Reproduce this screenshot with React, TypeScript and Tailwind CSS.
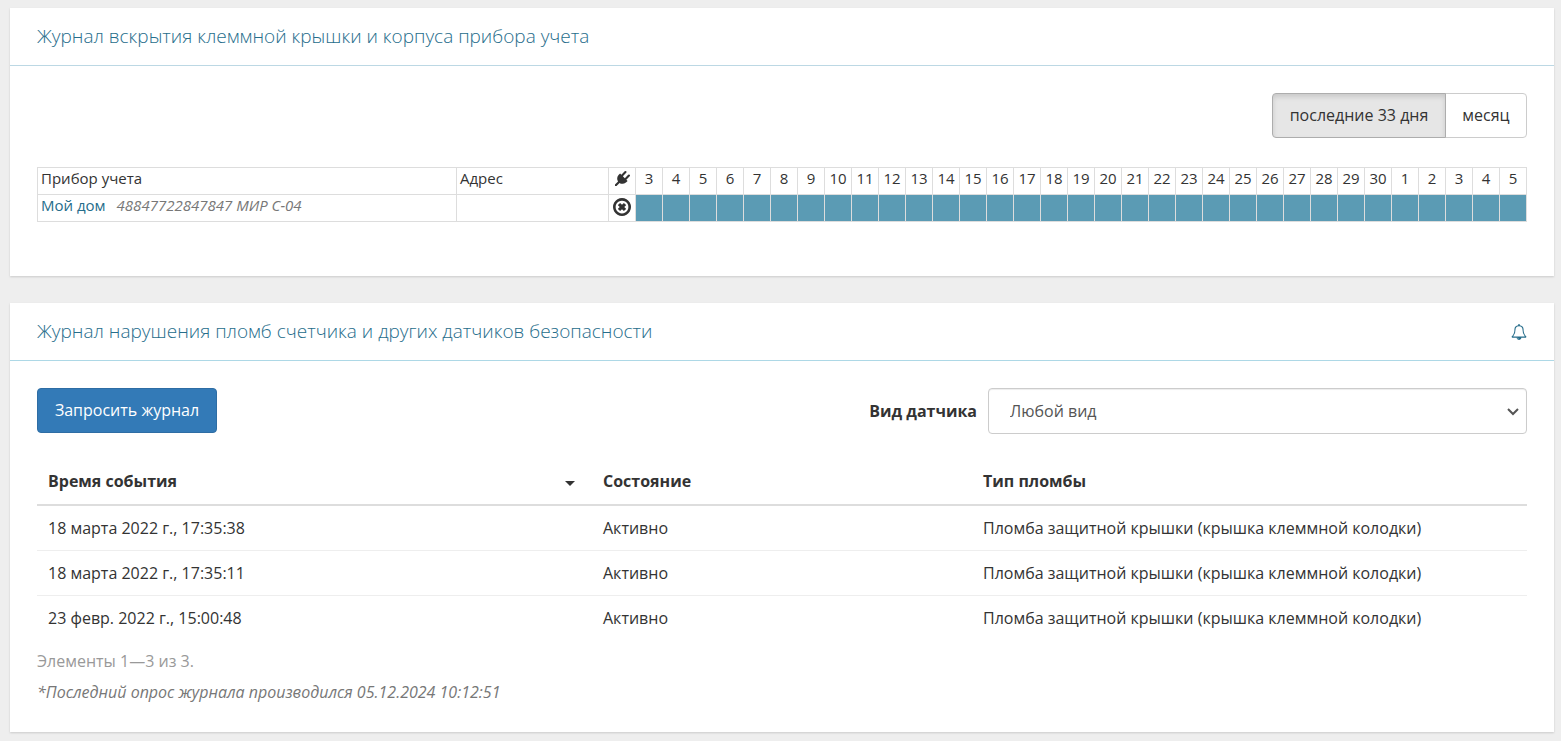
import { useState } from 'react';

const days = [
  3, 4, 5, 6, 7, 8, 9, 10, 11, 12, 13, 14, 15, 16, 17, 18, 19, 20, 21, 22, 23,
  24, 25, 26, 27, 28, 29, 30, 1, 2, 3, 4, 5,
];

const events = [
  { time: '18 марта 2022 г., 17:35:38', state: 'Активно' },
  { time: '18 марта 2022 г., 17:35:11', state: 'Активно' },
  { time: '23 февр. 2022 г., 15:00:48', state: 'Активно' },
];

const PlugIcon = () => (
  <svg viewBox="0 0 1792 1792" className="mx-auto size-[15px]" fill="currentColor">
    <path d="M1755 453q37 38 37 90.5t-37 90.5l-401 400 150 150-160 160q-163 163-389.5 186.5t-411.5-100.5l-362 362h-181v-181l362-362q-124-185-100.5-411.5t186.5-389.5l160-160 150 150 400-401q38-37 91-37t90 37 37 90.5-37 90.5l-400 401 234 234 401-400q38-37 91-37t90 37z" />
  </svg>
);

const CrossIcon = () => (
  <svg viewBox="128 128 1536 1536" className="mx-auto size-[18px]" fill="currentColor">
    <path d="M1225 1079l-146 146q-10 10-23 10t-23-10l-137-137-137 137q-10 10-23 10t-23-10l-146-146q-10-10-10-23t10-23l137-137-137-137q-10-10-10-23t10-23l146-146q10-10 23-10t23 10l137 137 137-137q10-10 23-10t23 10l146 146q10 10 10 23t-10 23l-137 137 137 137q10 10 10 23t-10 23zm215-183q0-148-73-273t-198-198-273-73-273 73-198 198-73 273 73 273 198 198 273 73 273-73 198-198 73-273zm224 0q0 209-103 385.5t-279.5 279.5-385.5 103-385.5-103-279.5-279.5-103-385.5 103-385.5 279.5-279.5 385.5-103 385.5 103 279.5 279.5 103 385.5z" />
  </svg>
);

const BellIcon = () => (
  <svg viewBox="0 0 1792 1792" className="size-4" fill="currentColor">
    <path d="M912 1696q0-16-16-16-59 0-101.5-42.5t-42.5-101.5q0-16-16-16t-16 16q0 73 51.5 124.5t124.5 51.5q16 0 16-16zm-666-288h1300q-266-300-266-832 0-51-24-105t-69-103-121.5-80.5-169.5-31.5-169.5 31.5-121.5 80.5-69 103-24 105q0 532-266 832zm1482 0q0 52-38 90t-90 38h-448q0 106-75 181t-181 75-181-75-75-181h-448q-52 0-90-38t-38-90q50-42 91-88t85-119.5 74.5-158.5 50-206 19.5-260q0-152 117-282.5t307-158.5q-8-19-8-39 0-40 28-68t68-28 68 28 28 68q0 20-8 39 190 28 307 158.5t117 282.5q0 139 19.5 260t50 206 74.5 158.5 85 119.5 91 88z" />
  </svg>
);

// Журнал вскрытия
const OpeningLog = () => {
  const [period, setPeriod] = useState('days');

  const active =
    'z-10 border-[#adadad] bg-[#e6e6e6] shadow-[inset_0_3px_5px_rgba(0,0,0,0.125)]';
  const idle = 'border-[#ccc] bg-white';

  return (
    <section className="bg-white shadow-[0_1px_2px_rgba(0,0,0,0.15)]">
      <header className="border-b border-[#bcd8e4] px-[27px] py-[15px]">
        <h2 className="text-[19px] leading-[27px] font-light text-[#266d8b]">
          Журнал вскрытия клеммной крышки и корпуса прибора учета
        </h2>
      </header>
      <div className="px-[27px] pt-[27px] pb-[54px]">
        <div className="flex justify-end">
          <button
            type="button"
            onClick={() => setPeriod('days')}
            className={`relative h-[45px] w-[174px] cursor-pointer rounded-l border pb-0.5 ${period === 'days' ? active : idle}`}>
            последние 33 дня
          </button>
          <button
            type="button"
            onClick={() => setPeriod('month')}
            className={`relative -ml-px h-[45px] w-[82px] cursor-pointer rounded-r border pb-0.5 ${period === 'month' ? active : idle}`}>
            месяц
          </button>
        </div>
        <table className="mt-[29px] w-full table-fixed border-collapse text-[15px] leading-5 [&_td]:border [&_td]:border-[#ddd] [&_th]:border [&_th]:border-[#ddd] [&_th]:font-normal">
          <colgroup>
            <col />
            <col className="w-[152px]" />
            <col className="w-[27px]" />
            {days.map((_, i) => (
              <col key={i} className="w-[27px]" />
            ))}
          </colgroup>
          <thead>
            <tr className="h-[27px] align-top">
              <th className="px-[3px] text-left">Прибор учета</th>
              <th className="px-[3px] text-left">Адрес</th>
              <th className="pt-[3px]">
                <PlugIcon />
              </th>
              {days.map((day, i) => (
                <th key={i}>{day}</th>
              ))}
            </tr>
          </thead>
          <tbody>
            <tr className="h-[27px] align-top">
              <td className="px-[3px]">
                <a href="#" className="mr-[11px] text-[#266d8b]">
                  Мой дом
                </a>
                <em className="text-[#777]">48847722847847 МИР С-04</em>
              </td>
              <td></td>
              <td className="pt-[3px]">
                <CrossIcon />
              </td>
              {days.map((_, i) => (
                <td key={i} className="bg-[#5b9bb4]"></td>
              ))}
            </tr>
          </tbody>
        </table>
      </div>
    </section>
  );
};

// Журнал нарушения пломб
const SealLog = () => (
  <section className="bg-white shadow-[0_1px_2px_rgba(0,0,0,0.15)]">
    <header className="flex items-center justify-between border-b border-[#add8e6] px-[27px] py-[15px]">
      <h2 className="text-[19px] leading-[27px] font-light text-[#266d8b]">
        Журнал нарушения пломб счетчика и других датчиков безопасности
      </h2>
      <button type="button" aria-label="Уведомления" className="cursor-pointer text-[#266d8b]">
        <BellIcon />
      </button>
    </header>
    <div className="px-[27px] pt-[27px] pb-6">
      <div className="flex items-start justify-between">
        <button
          type="button"
          className="h-[45px] w-[180px] cursor-pointer rounded border border-[#2e6da4] bg-[#337ab7] pb-0.5 font-medium text-white">
          Запросить журнал
        </button>
        <div className="flex items-center gap-[11px]">
          <label htmlFor="sensor" className="font-bold">
            Вид датчика
          </label>
          <div className="relative">
            <select
              id="sensor"
              className="block h-[46px] w-[539px] appearance-none rounded border border-[#ccc] bg-white px-[21px] text-[#555] shadow-[inset_0_1px_1px_rgba(0,0,0,0.075)]">
              <option>Любой вид</option>
            </select>
            <svg
              viewBox="0 0 12 8"
              className="pointer-events-none absolute top-[20px] right-2 h-2 w-3 text-[#555]"
              fill="none"
              stroke="currentColor"
              strokeWidth="2">
              <path d="M1 1l5 5 5-5" />
            </svg>
          </div>
        </div>
      </div>
      <table className="mt-[25px] w-full table-fixed text-left leading-[23px] [&_td]:p-[11px] [&_td]:leading-[22px] [&_th]:p-[11px]">
        <colgroup>
          <col className="w-[555px]" />
          <col className="w-[380px]" />
          <col />
        </colgroup>
        <thead className="border-b-2 border-[#ddd]">
          <tr>
            <th>
              <div className="flex items-center justify-between">
                Время события
                <span className="mt-1 mr-1.5 border-x-[5px] border-t-[5px] border-x-transparent border-t-[#333]"></span>
              </div>
            </th>
            <th>Состояние</th>
            <th>Тип пломбы</th>
          </tr>
        </thead>
        <tbody className="divide-y divide-[#eee]">
          {events.map((event) => (
            <tr key={event.time}>
              <td>{event.time}</td>
              <td>{event.state}</td>
              <td>Пломба защитной крышки (крышка клеммной колодки)</td>
            </tr>
          ))}
        </tbody>
      </table>
      <p className="mt-1.5 leading-[31px] text-[#999]">Элементы 1—3 из 3.</p>
      <p className="leading-[31px] text-[#777] italic">
        *Последний опрос журнала производился 05.12.2024 10:12:51
      </p>
    </div>
  </section>
);

const App = () => (
  <main className="flex min-h-screen flex-col gap-[27px] bg-[#eee] pt-2 pr-[7px] pb-[9px] pl-[10px] font-['Open_Sans','Noto_Sans',sans-serif] text-base text-[#333]">
    <OpeningLog />
    <SealLog />
  </main>
);

export default App;
